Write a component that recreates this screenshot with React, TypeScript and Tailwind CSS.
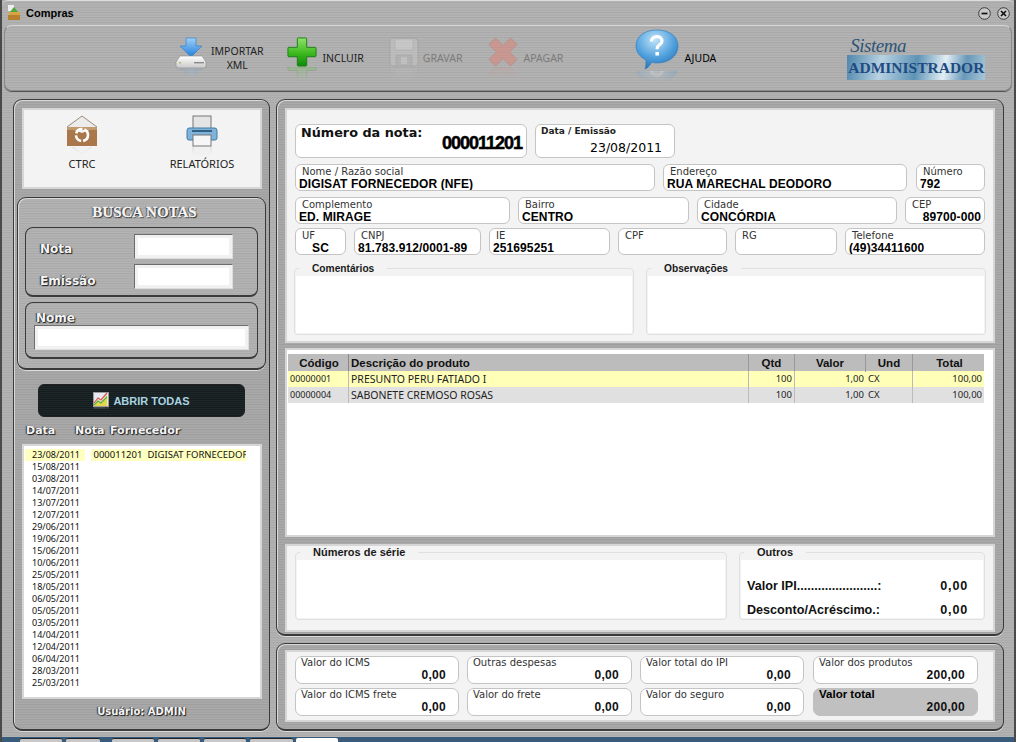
import React from "react";

const metal = "bg-[repeating-linear-gradient(0deg,#b4b4b4_0px,#b4b4b4_1px,#acacac_1px,#acacac_2px,#b1b1b1_2px,#b1b1b1_4px,#a9a9a9_4px,#a9a9a9_5px)]";
const metal2 = "bg-[repeating-linear-gradient(0deg,#aaaaaa_0px,#aaaaaa_1px,#a2a2a2_1px,#a2a2a2_2px,#a7a7a7_2px,#a7a7a7_4px,#9f9f9f_4px,#9f9f9f_5px)]";
const sans = "font-['DejaVu_Sans',sans-serif]";
const tah = "font-['Noto_Sans',sans-serif]";
const shadowText = "text-[#f4f4f4] font-bold [text-shadow:1px_1px_1px_#1c1c1c,-1px_0px_1px_#333333]";

function Reflect({ children, h = 16 }: { children: React.ReactNode; h?: number }) {
  return (
    <div className="flex flex-col items-center">
      {children}
      <div style={{ height: h }} className="overflow-hidden opacity-25 [transform:scaleY(-1)] [mask-image:linear-gradient(to_top,black,transparent)]">
        {children}
      </div>
    </div>
  );
}

const ImportIcon = () => (
  <svg width="32" height="32" viewBox="0 0 32 32">
    <defs>
      <linearGradient id="ib" x1="0" y1="0" x2="0" y2="1"><stop offset="0" stopColor="#9fd0f7" /><stop offset="1" stopColor="#1f7fdc" /></linearGradient>
      <linearGradient id="id" x1="0" y1="0" x2="0" y2="1"><stop offset="0" stopColor="#ffffff" /><stop offset="1" stopColor="#c9c9c9" /></linearGradient>
    </defs>
    <path d="M11 1h10v8h6l-11 11L5 9h6z" fill="url(#ib)" stroke="#2d7dc9" strokeWidth=".6" />
    <path d="M5 19h22l4 6v4q0 2-2 2H3q-2 0-2-2v-4z" fill="url(#id)" stroke="#8c8c8c" strokeWidth=".6" />
    <rect x="19" y="25" width="10" height="1.4" fill="#8a8a8a" />
    <rect x="4" y="25" width="2" height="1.4" fill="#9bc94a" />
  </svg>
);
const PlusIcon = () => (
  <svg width="30" height="30" viewBox="0 0 32 32">
    <defs><linearGradient id="pg" x1="0" y1="0" x2="0" y2="1"><stop offset="0" stopColor="#8fe36a" /><stop offset=".55" stopColor="#3db81f" /><stop offset="1" stopColor="#0c8a0a" /></linearGradient></defs>
    <path d="M12 1q-1 0-1 1v9H2q-1 0-1 1v8q0 1 1 1h9v9q0 1 1 1h8q1 0 1-1v-9h9q1 0 1-1v-8q0-1-1-1h-9V2q0-1-1-1z" fill="url(#pg)" stroke="#1b7d14" strokeWidth="1" />
  </svg>
);
const FloppyIcon = () => (
  <svg width="30" height="30" viewBox="0 0 30 30" className="opacity-50">
    <path d="M2 1h24l3 3v23q0 2-2 2H3q-2 0-2-2V2q0-1 1-1z" fill="#c8c8c8" stroke="#9a9a9a" />
    <rect x="6" y="2" width="18" height="11" fill="#dcdcdc" stroke="#a3a3a3" strokeWidth=".6" />
    <rect x="7" y="18" width="16" height="11" fill="#b4b4b4" stroke="#9a9a9a" strokeWidth=".6" />
    <rect x="12" y="20" width="6" height="7" fill="#d0d0d0" />
  </svg>
);
const XIcon = () => (
  <svg width="30" height="30" viewBox="0 0 32 32" className="opacity-45">
    <path d="M8 1l8 8 8-8 7 7-8 8 8 8-7 7-8-8-8 8-7-7 8-8-8-8z" fill="#e57a6c" stroke="#c9685c" />
  </svg>
);
const HelpIcon = () => (
  <svg width="44" height="42" viewBox="0 0 44 42">
    <defs><radialGradient id="hg" cx=".45" cy=".25" r=".85"><stop offset="0" stopColor="#bfe3fa" /><stop offset=".55" stopColor="#4f9fdc" /><stop offset="1" stopColor="#1c66ad" /></radialGradient></defs>
    <path d="M22 1c12 0 21 6 21 16s-9 17-21 17c-2 0-3 0-5-1-2 3-4 6-7 7 1-3 1-6 1-9C5 28 1 23 1 17 1 7 10 1 22 1z" fill="url(#hg)" stroke="#2b78bd" strokeWidth=".6" />
    <path d="M16.5 12.5c0-3.2 2.3-4.8 5.2-4.8 3 0 5.3 1.6 5.3 4.3 0 3.8-4.8 3.8-4.8 7.3v1" fill="none" stroke="#ffffff" strokeWidth="3.2" />
    <rect x="20.4" y="23" width="3.6" height="3.6" rx=".6" fill="#ffffff" />
  </svg>
);
const BoxIcon = () => (
  <svg width="32" height="32" viewBox="0 0 32 32">
    <path d="M1 12L16 1l15 11" fill="#ececec" stroke="#9c8a75" />
    <path d="M1 12l15 6 15-6v19H1z" fill="#a9774a" />
    <path d="M1 12h30v3H1z" fill="#c29a6f" />
    <circle cx="16" cy="20" r="6" fill="none" stroke="#ffffff" strokeWidth="2.6" strokeDasharray="8 2" />
  </svg>
);
const PrinterIcon = () => (
  <svg width="32" height="32" viewBox="0 0 32 32">
    <rect x="7" y="1" width="18" height="14" fill="#e4e4e4" stroke="#777777" />
    <path d="M3 13h26q2 0 2 3v7q0 2-2 2H3q-2 0-2-2v-7q0-3 2-3z" fill="#7fb3d9" stroke="#3f7ba6" />
    <rect x="7" y="20" width="18" height="11" fill="#f6f6f6" stroke="#777777" />
    <rect x="6" y="15" width="20" height="2" fill="#335f80" />
  </svg>
);
const ChartIcon = () => (
  <svg width="16" height="15" viewBox="0 0 16 15">
    <rect x=".5" y=".5" width="15" height="14" fill="#e8e8f2" stroke="#9a9a9a" />
    <path d="M1 13l4-5 3 2 6-7v11H1z" fill="#e2d94a" />
    <path d="M1 11l4-5 3 2 6-7" fill="none" stroke="#d9534f" strokeWidth="1.2" />
    <path d="M1 13l4-4 3 2 6-6" fill="none" stroke="#5cb04a" strokeWidth="1.2" />
  </svg>
);
const AppIcon = () => (
  <svg width="14" height="16" viewBox="0 0 14 16">
    <path d="M1 0h6v6H1z" fill="#eeeeee" />
    <path d="M3 7l4-5 4 5z" fill="#4fa83a" />
    <rect x="2" y="7" width="11" height="3" fill="#d9a441" />
    <rect x="1" y="10" width="12" height="5" fill="#b7802e" />
  </svg>
);
const WinBtn = ({ x }: { x?: boolean }) => (
  <svg width="13" height="13" viewBox="0 0 13 13">
    <circle cx="6.5" cy="6.5" r="5.8" fill="#c9c9c9" stroke="#3d3d3d" />
    {x ? <path d="M4 4l5 5M9 4l-5 5" stroke="#111111" strokeWidth="1.7" /> : <path d="M3.5 6.5h6" stroke="#111111" strokeWidth="1.7" />}
  </svg>
);

function Tool({ icon, label, dim, ml, refl = 16, black, gap = "ml-[4px]" }: { icon: React.ReactNode; label: React.ReactNode; dim?: boolean; ml: string; refl?: number; black?: boolean; gap?: string }) {
  return (
    <div className={`flex items-start ${ml}`}>
      <Reflect h={refl}>{icon}</Reflect>
      <div className={`${tah} text-[10.5px] leading-[14px] text-center ${gap} mt-[7px] ${dim ? "text-[#7b7b7b]" : black ? "text-black" : "text-[#222222]"}`}>{label}</div>
    </div>
  );
}

function Field({ w, label, value, center, right }: { w: string; label: string; value?: string; center?: boolean; right?: boolean }) {
  return (
    <div className={`${w} h-[27px] shrink-0 rounded-[6px] border border-[#c4c4c4] bg-white px-[3px] flex flex-col overflow-hidden`}>
      <div className={`${sans} text-[10px] leading-[11px] ml-[3px] mt-[1px] text-[#333333] whitespace-nowrap`}>{label}</div>
      <div className={`font-['Liberation_Sans',sans-serif] font-bold text-[12px] leading-[13px] mt-[1px] tracking-[0.1px] text-black whitespace-nowrap ${center ? "text-center" : ""} ${right ? "text-right" : ""}`}>{value ?? " "}</div>
    </div>
  );
}

function Money({ w, label, value, total }: { w: string; label: string; value: string; total?: boolean }) {
  return (
    <div className={`${w} h-[28px] rounded-[7px] border ${total ? "bg-[#c0c0c0] border-[#c0c0c0]" : "bg-white border-[#c4c4c4]"} flex flex-col px-[5px] overflow-hidden`}>
      <div className={`${total ? "font-['Liberation_Sans',sans-serif] font-bold text-[11.5px] text-black" : `${sans} text-[10px] text-[#333333]`} leading-[11px] whitespace-nowrap`}>{label}</div>
      <div className="font-['Liberation_Sans',sans-serif] font-bold text-[12px] leading-[13px] mt-[1px] text-right pr-[7px] text-[#111111] tracking-[0.3px]">{value}</div>
    </div>
  );
}

function Group({ w, h, label, size, children }: { w: string; h: string; label: string; size: string; children?: React.ReactNode }) {
  return (
    <div className={`${w} ${h} relative rounded-[4px] border border-[#e0e0e0] flex flex-col pt-[7px] px-[1px] pb-[1px]`}>
      <span className={`absolute left-[4px] -top-[6px] px-[13px] bg-[#f3f3f3] font-['Liberation_Sans',sans-serif] font-bold ${size} leading-[11px] text-[#1a1a1a] whitespace-nowrap`}>{label}</span>
      <div className="flex-1 bg-white px-[6px]">{children}</div>
    </div>
  );
}

const cols = "grid grid-cols-[61px_400px_46px_71px_47px_71px] w-[696px]";
const items = [
  ["00000001", "PRESUNTO PERU FATIADO I", "100", "1,00", "CX", "100,00", "bg-[#ffffb8]"],
  ["00000004", "SABONETE CREMOSO ROSAS", "100", "1,00", "CX", "100,00", "bg-[#e0e0e0]"],
];
const dates = ["23/08/2011","15/08/2011","03/08/2011","14/07/2011","13/07/2011","12/07/2011","29/06/2011","19/06/2011","15/06/2011","10/06/2011","25/05/2011","18/05/2011","06/05/2011","05/05/2011","03/05/2011","14/04/2011","12/04/2011","06/04/2011","28/03/2011","25/03/2011"];

const panel = "border border-[#3a3a3a] border-b-2 rounded-[9px] shadow-[inset_1px_1px_0_#d8d8d8,0_1px_0_#dddddd]";
const sub = "border border-[#3a3a3a] border-b-2 rounded-[8px]";
const inputCls = "bg-white border border-[#6d6d6d] border-r-[#dddddd] border-b-[#dddddd] shadow-[inset_0_0_0_3px_#f1f1f1]";

export default function App() {
  return (
    <div className={`w-[1016px] h-[742px] overflow-hidden flex flex-col ${metal} border-x-2 border-[#4a4a4a]`}>
      <div className="h-[25px] flex items-center pl-[5px] pr-[4px] shrink-0 border-t border-[#dddddd] rounded-t-[6px]">
        <AppIcon />
        <span className="font-['Liberation_Sans',sans-serif] font-bold text-[11px] text-black ml-[5px] mt-[1px]">Compras</span>
        <div className="ml-auto flex gap-[6px]"><WinBtn /><WinBtn x /></div>
      </div>
      <div className="mx-[2px] h-[66px] shrink-0 rounded-[8px] border border-[#8a8a8a] border-t-[#d4d4d4] flex items-start pt-[11px] shadow-[0_1px_0_#555555] overflow-hidden">
        <Tool ml="ml-[170px]" icon={<ImportIcon />} label={<>IMPORTAR<br />XML</>} refl={10} />
        <Tool ml="ml-[23px]" gap="ml-[6px]" icon={<PlusIcon />} label={<span className="block mt-[7px]">INCLUIR</span>} refl={14} />
        <Tool ml="ml-[25px]" icon={<FloppyIcon />} label={<span className="block mt-[7px]">GRAVAR</span>} dim refl={14} />
        <Tool ml="ml-[26px]" gap="ml-[5px]" icon={<XIcon />} label={<span className="block mt-[7px]">APAGAR</span>} dim refl={14} />
        <div className="ml-[72px] -mt-[8px]">
          <Tool ml="" icon={<HelpIcon />} label={<span className="block mt-[15px] ml-[1px]">AJUDA</span>} refl={12} black />
        </div>
        <div className="ml-[131px] flex flex-col w-[139px]">
          <span className="font-['Liberation_Serif',serif] italic text-[19px] leading-[18px] text-[#2e5478] ml-[3px] tracking-[-0.5px]">Sistema</span>
          <div className="h-[25px] w-[138px] bg-[linear-gradient(100deg,#4f86ab_0%,#b8d2e2_25%,#5e93b5_50%,#e2eef4_70%,#6898b8_85%,#a9c7d9_100%)] flex items-center justify-center">
            <span className="font-['Liberation_Serif',serif] font-bold text-[15.5px] text-[#1f4a82] whitespace-nowrap">ADMINISTRADOR</span>
          </div>
        </div>
      </div>

      <div className="flex flex-1 pt-[8px] pl-[11px] gap-[6px] min-h-0">
        <div className={`w-[257px] h-[632px] ${panel} ${metal2} flex flex-col px-[2px] pt-[8px] items-center`}>
          <div className="w-[240px] h-[81px] bg-[#f3f3f3] border-2 border-[#d6d6d6] flex shrink-0 pt-[5px]">
            <div className="w-[121px] flex flex-col items-center pr-[4px]">
              <Reflect h={8}><BoxIcon /></Reflect>
              <span className={`${tah} text-[11px] leading-[14px] mt-[2px] text-[#222222]`}>CTRC</span>
            </div>
            <div className="flex-1 flex flex-col items-center">
              <Reflect h={8}><PrinterIcon /></Reflect>
              <span className={`${tah} text-[11px] leading-[14px] mt-[2px] text-[#222222]`}>RELATÓRIOS</span>
            </div>
          </div>
          <div className={`w-[249px] h-[173px] mt-[8px] ${panel} ${metal} px-[7px] flex flex-col items-center shrink-0`}>
            <div className={`font-['Liberation_Serif',serif] ${shadowText} [-webkit-text-stroke:0.3px_#f4f4f4] text-[15px] leading-[18px] mt-[5px] ml-[6px]`}>BUSCA NOTAS</div>
            <div className={`h-[70px] w-[233px] mt-[6px] ${sub} flex shrink-0 pl-[14px] pr-[24px] pt-[6px]`}>
              <div className={`${sans} ${shadowText} text-[12px] flex flex-col flex-1 mt-[2px]`}>
                <span className="h-[32px] leading-[26px]">Nota</span>
                <span className="leading-[26px]">Emissão</span>
              </div>
              <div className="flex flex-col gap-[5px]">
                <div className={`w-[99px] h-[25px] ${inputCls}`} />
                <div className={`w-[99px] h-[25px] ${inputCls}`} />
              </div>
            </div>
            <div className={`h-[57px] w-[233px] mt-[5px] ${sub} px-[8px] shrink-0`}>
              <div className={`${sans} ${shadowText} text-[12px] leading-[14px] mt-[8px] ml-[2px]`}>Nome</div>
              <div className={`w-[215px] h-[25px] ${inputCls}`} />
            </div>
          </div>
          <div className="w-[207px] h-[33px] mt-[14px] shrink-0 rounded-[6px] border border-[#222222] bg-[repeating-linear-gradient(0deg,#141c1e_0px,#141c1e_1px,#1e2729_1px,#1e2729_2px)] flex items-center justify-center gap-[4px]">
            <Reflect h={3}><ChartIcon /></Reflect>
            <span className="font-['Liberation_Sans',sans-serif] font-bold text-[11px] text-[#a9d3e0] mt-[1px]">ABRIR TODAS</span>
          </div>
          <div className={`w-full h-[15px] mt-[6px] flex ${sans} ${shadowText} text-[11px] leading-[15px] shrink-0 pl-[10px]`}>
            <span className="w-[49px]">Data</span>
            <span className="w-[35px]">Nota</span>
            <span>Fornecedor</span>
          </div>
          <div className="w-[240px] h-[255px] mt-[6px] bg-white border-2 border-[#d6d6d6] flex pt-[3px] pl-[1px] shrink-0">
            <div className="flex flex-col w-[60px]">
              {dates.map((d, i) => (
                <div key={i} className={`h-[12px] leading-[12px] ${i === 0 ? "bg-[#ffffc0]" : ""} text-center font-['Noto_Sans',sans-serif] text-[9px] text-[#111111] pl-[3px]`}>{d}</div>
              ))}
            </div>
            <div className="w-[155px] h-[12px] bg-[#ffffc0] ml-[6px] pl-[3px] text-[9.5px] leading-[12px] font-['Noto_Sans',sans-serif] text-[#111111] whitespace-nowrap overflow-hidden flex gap-[5px]">
              <span>000011201</span><span>DIGISAT FORNECEDOR</span>
            </div>
          </div>
          <div className={`${sans} ${shadowText} text-[10px] leading-[12px] mt-[7px]`}>Usuário: ADMIN</div>
        </div>

        <div className="w-[728px] flex flex-col gap-[7px]">
          <div className={`h-[537px] ${panel} flex flex-col px-[8px] pt-[8px] ${metal2}`}>
            <div className="h-[235px] bg-[#f3f3f3] border-2 border-[#d6d6d6] shrink-0 pl-[8px] pt-[14px] flex flex-col">
              <div className="flex gap-[8px]">
                <div className="w-[232px] h-[34px] rounded-[6px] border border-[#c4c4c4] bg-white flex px-[5px] justify-between">
                  <span className={`${sans} font-bold text-[12.8px] leading-[14px] mt-[1px] text-[#111111]`}>Número da nota:</span>
                  <span className="font-['Liberation_Sans',sans-serif] font-bold text-[18px] leading-[20px] mt-[8px] tracking-[-1px] text-black [-webkit-text-stroke:0.5px_black] -mr-[1px]">000011201</span>
                </div>
                <div className="w-[140px] h-[34px] rounded-[6px] border border-[#c4c4c4] bg-white flex flex-col px-[5px]">
                  <span className={`${sans} font-bold text-[9px] leading-[11px] mt-[1px] text-[#222222]`}>Data / Emissão</span>
                  <span className={`${sans} text-[12.5px] leading-[15px] ml-[49px] mt-[3px] text-black`}>23/08/2011</span>
                </div>
              </div>
              <div className="flex gap-[8px] mt-[6px]">
                <Field w="w-[360px]" label="Nome / Razão social" value="DIGISAT FORNECEDOR (NFE)" />
                <Field w="w-[244px]" label="Endereço" value="RUA MARECHAL DEODORO" />
                <Field w="w-[69px] ml-[1px]" label="Número" value="792" />
              </div>
              <div className="flex gap-[8px] mt-[6px]">
                <Field w="w-[215px]" label="Complemento" value="ED. MIRAGE" />
                <Field w="w-[171px]" label="Bairro" value="CENTRO" />
                <Field w="w-[200px]" label="Cidade" value="CONCÓRDIA" />
                <Field w="w-[80px]" label="CEP" value="89700-000" right />
              </div>
              <div className="flex gap-[8px] mt-[4px]">
                <Field w="w-[51px]" label="UF" value="SC" center />
                <Field w="w-[127px]" label="CNPJ" value="81.783.912/0001-89" />
                <Field w="w-[121px]" label="IE" value="251695251" />
                <Field w="w-[109px]" label="CPF" />
                <Field w="w-[102px]" label="RG" />
                <Field w="w-[140px]" label="Telefone" value="(49)34411600" />
              </div>
              <div className="flex gap-[12px] mt-[13px] -ml-[1px]">
                <Group w="w-[340px]" h="h-[67px]" label="Comentários" size="text-[10.2px]" />
                <Group w="w-[340px]" h="h-[67px]" label="Observações" size="text-[10.2px]" />
              </div>
            </div>
            <div className="h-[189px] mt-[5px] bg-white border-2 border-[#d6d6d6] shrink-0 pl-[1px] pt-[4px]">
              <div className={`${cols} h-[17px] bg-[#bcbcbc] font-['Liberation_Sans',sans-serif] font-bold text-[11.5px] leading-[18px] text-[#111111]`}>
                <div className="text-center border-r border-[#888888] pl-[2px]">Código</div>
                <div className="pl-[2px] border-r border-[#999999]">Descrição do produto</div>
                <div className="text-center border-r border-[#999999]">Qtd</div>
                <div className="text-center border-r border-[#999999]">Valor</div>
                <div className="text-center border-r border-[#999999]">Und</div>
                <div className="text-center pl-[2px]">Total</div>
              </div>
              {items.map((r, i) => (
                <div key={i} className={`${cols} h-[16px] ${r[6]} font-['Noto_Sans',sans-serif] text-[9px] leading-[16px] text-[#222222]`}>
                  <div className="pl-[2px] border-r border-[#bbbbbb]">{r[0]}</div>
                  <div className="pl-[2px] border-r border-[#bbbbbb] text-[10.5px]">{r[1]}</div>
                  <div className="text-right pr-[2px] border-r border-[#bbbbbb] text-[9.5px]">{r[2]}</div>
                  <div className="text-right pr-[2px] text-[9.5px]">{r[3]}</div>
                  <div className="pl-[2px] border-r border-[#bbbbbb] text-[9.5px]">{r[4]}</div>
                  <div className="text-right pr-[2px] text-[9.5px]">{r[5]}</div>
                </div>
              ))}
            </div>
            <div className="h-[88px] mt-[7px] bg-[#f3f3f3] border-2 border-[#d6d6d6] shrink-0 pl-[8px] pt-[6px] flex gap-[12px]">
              <Group w="w-[432px]" h="h-[68px]" label="Números de série" size="text-[11px]" />
              <Group w="w-[246px]" h="h-[68px]" label="Outros" size="text-[11px]">
                <div className="font-['Liberation_Sans',sans-serif] font-bold text-[12.6px] text-[#111111]">
                  <div className="flex justify-between pr-[9px] pt-[19px] leading-[14px]"><span>Valor IPI.......................:</span><span className="tracking-[0.8px]">0,00</span></div>
                  <div className="flex justify-between pr-[9px] mt-[10px] leading-[14px]"><span>Desconto/Acréscimo.:</span><span className="tracking-[0.8px]">0,00</span></div>
                </div>
              </Group>
            </div>
          </div>
          <div className={`h-[88px] ${panel} ${metal2} px-[8px] pt-[6px]`}>
            <div className="h-[72px] bg-[#f3f3f3] border-2 border-[#d6d6d6] pl-[8px] pt-[4px] flex flex-col gap-[4px]">
              <div className="flex gap-[8px]">
                <Money w="w-[164px]" label="Valor do ICMS" value="0,00" />
                <Money w="w-[165px]" label="Outras despesas" value="0,00" />
                <Money w="w-[164px]" label="Valor total do IPI" value="0,00" />
                <Money w="w-[165px] ml-[1px]" label="Valor dos produtos" value="200,00" />
              </div>
              <div className="flex gap-[8px]">
                <Money w="w-[164px]" label="Valor do ICMS frete" value="0,00" />
                <Money w="w-[165px]" label="Valor do frete" value="0,00" />
                <Money w="w-[164px]" label="Valor do seguro" value="0,00" />
                <Money w="w-[165px] ml-[1px]" label="Valor total" value="200,00" total />
              </div>
            </div>
          </div>
        </div>
      </div>
      <div className="h-[5px] shrink-0 bg-[#3a5c7c] flex pl-[18px] items-end overflow-hidden">
        <div className="w-[42px] h-[4px] bg-[#c8c8c8] rounded-t-[2px] border-t border-[#222222]" />
        <div className="w-[34px] ml-[4px] h-[4px] bg-[#c8c8c8] rounded-t-[2px] border-t border-[#222222]" />
        <div className="w-[42px] ml-[12px] h-[4px] bg-[#c8c8c8] rounded-t-[2px] border-t border-[#222222]" />
        <div className="w-[42px] ml-[4px] h-[4px] bg-[#c8c8c8] rounded-t-[2px] border-t border-[#222222]" />
        <div className="w-[42px] ml-[4px] h-[4px] bg-[#c8c8c8] rounded-t-[2px] border-t border-[#222222]" />
        <div className="w-[43px] ml-[4px] h-[4px] bg-[#c8c8c8] rounded-t-[2px] border-t border-[#222222]" />
        <div className="w-[42px] ml-[3px] h-[4px] bg-white rounded-t-[2px]" />
      </div>
    </div>
  );
}
